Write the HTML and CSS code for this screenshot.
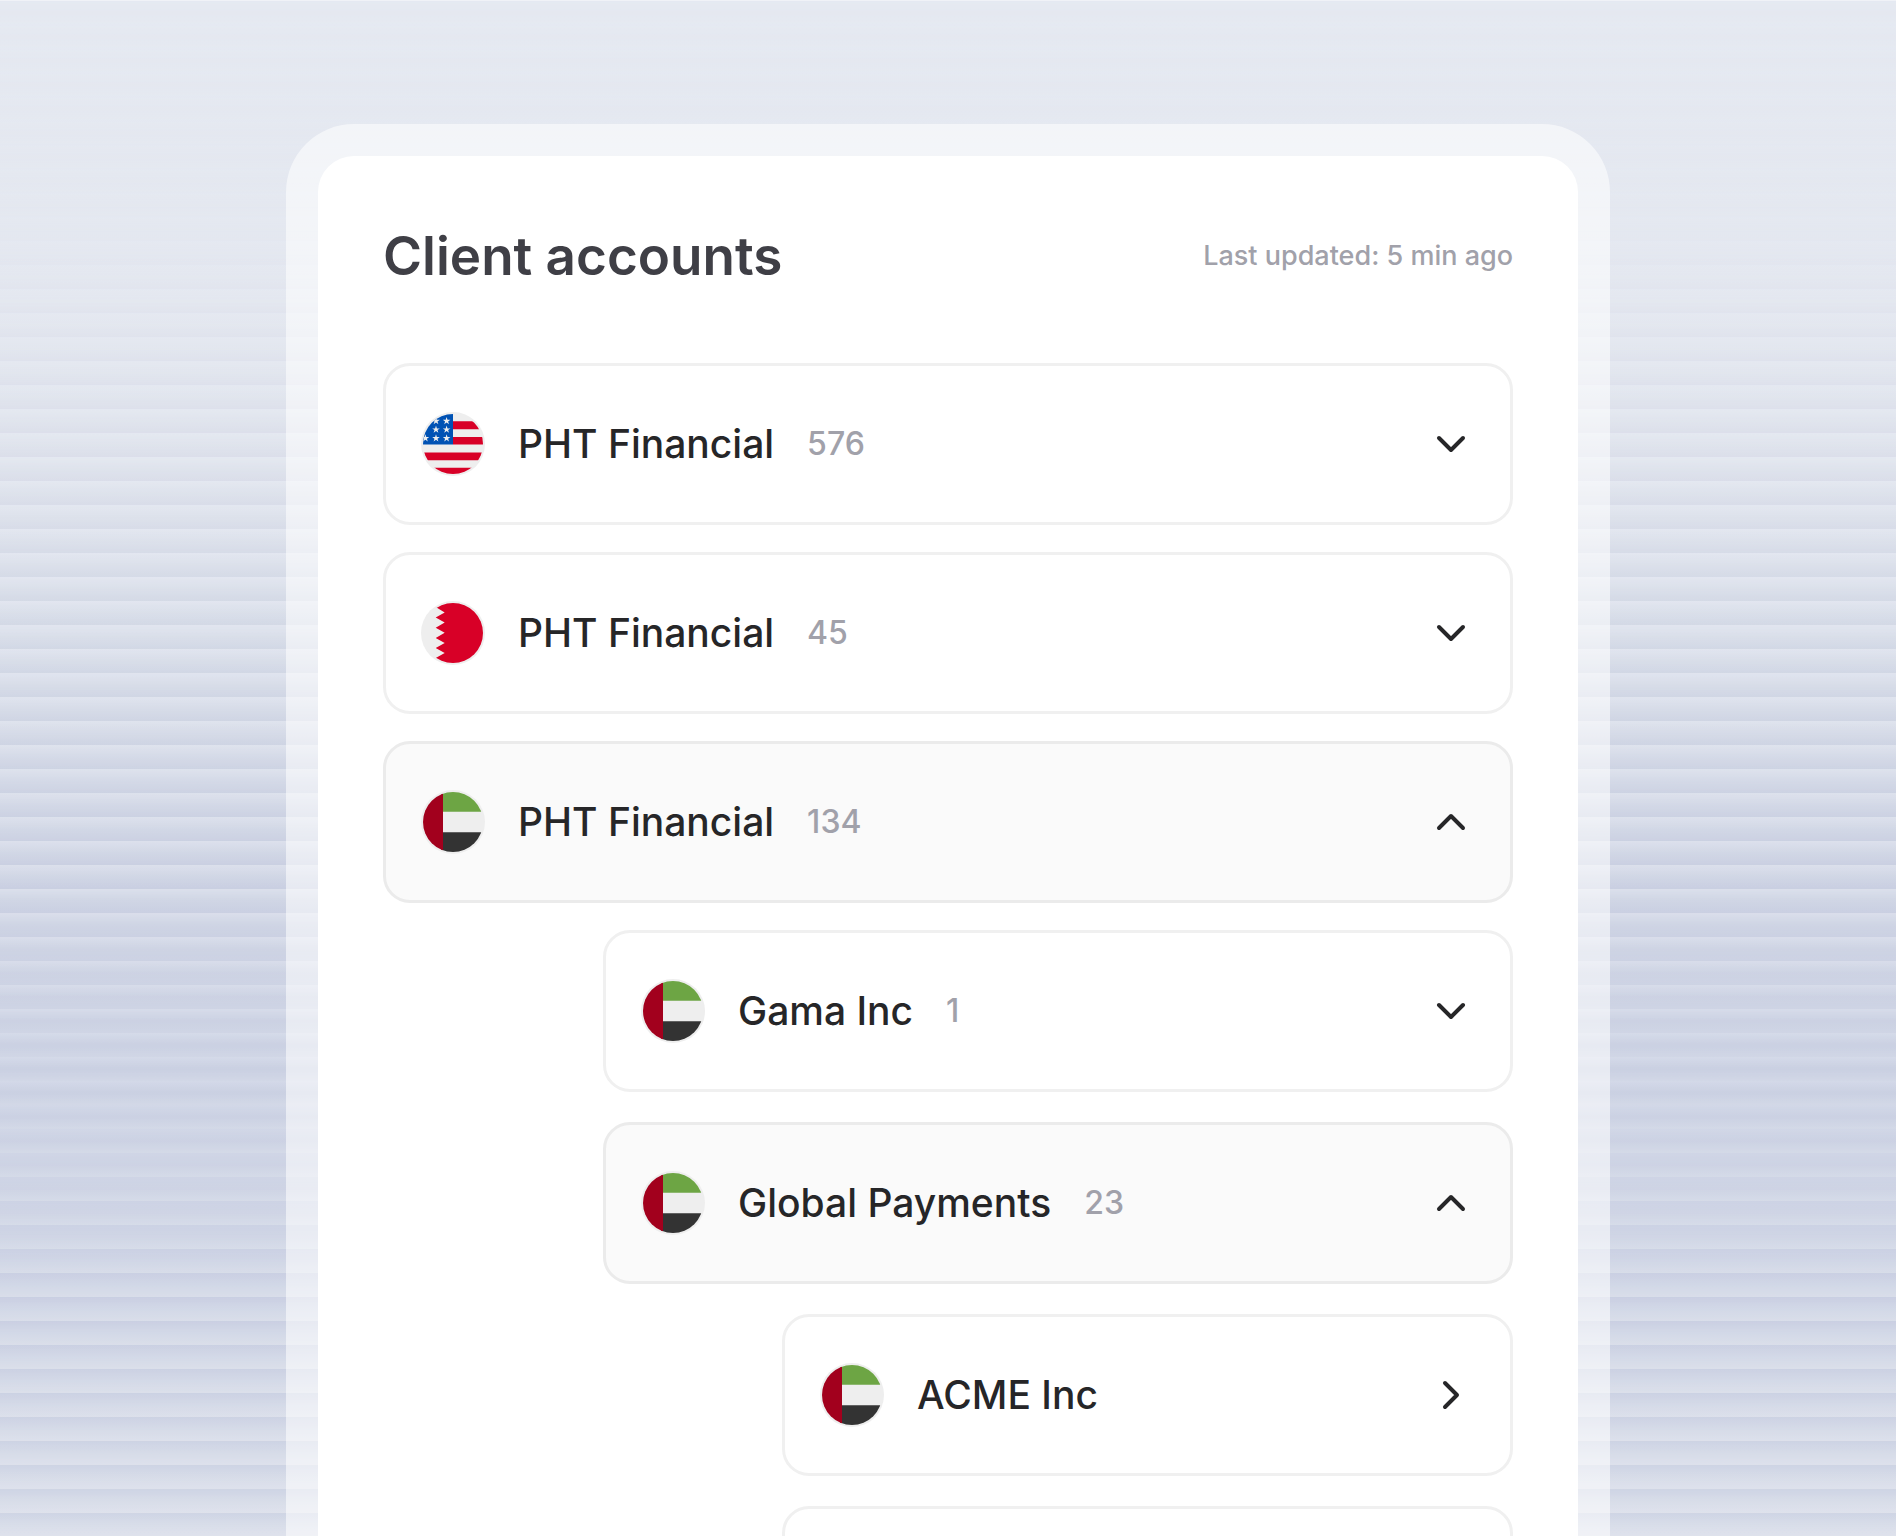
FILE: index.html
```html
<!DOCTYPE html>
<html lang="en">
<head>
    <meta charset="UTF-8">
    <meta name="viewport" content="width=device-width, initial-scale=1.0">
    <title>Client accounts</title>
    <link rel="stylesheet" href="styles.css">
</head>
<body>
    <!-- Shared icons -->
    <svg class="sprite" aria-hidden="true">
        <symbol id="chevron-down" viewBox="0 0 24 24"><path d="M6 9l6 6 6-6"/></symbol>
        <symbol id="chevron-up" viewBox="0 0 24 24"><path d="M6 15l6-6 6 6"/></symbol>
        <symbol id="chevron-right" viewBox="0 0 24 24"><path d="M9 6l6 6-6 6"/></symbol>
        <clipPath id="round"><circle cx="32" cy="32" r="30"/></clipPath>
        <path id="star" d="M0-4L.9-1.2H3.8L1.5.5 2.4 3.2 0 1.5-2.4 3.2-1.5.5-3.8-1.2H-.9Z" fill="#eee"/>
        <symbol id="flag-us" viewBox="0 0 64 64">
            <circle cx="32" cy="32" r="32" fill="#eee"/>
            <g clip-path="url(#round)">
                <path d="M32 9.3h32v8H32zM32 25h32v7.6H32zM0 40.6h64v7.7H0zM0 55.8h64V64H0z" fill="#d80027"/>
                <path d="M0 0h32v32.5H0z" fill="#0052b4"/>
                <use href="#star" x="15" y="9"/>
                <use href="#star" x="25.6" y="9"/>
                <use href="#star" x="4.4" y="26.2"/>
                <use href="#star" x="15" y="17.6"/>
                <use href="#star" x="25.6" y="17.6"/>
                <use href="#star" x="15" y="26.2"/>
                <use href="#star" x="25.6" y="26.2"/>
            </g>
        </symbol>
        <symbol id="flag-bh" viewBox="0 0 64 64">
            <circle cx="32" cy="32" r="32" fill="#eee"/>
            <path clip-path="url(#round)" d="M64 0H14.7V6l9 5.5-9 5 9 5-9 5.2 9 5.1-9 5.1 9 5-9 5 9 5-9 5V64H64z" fill="#d80027"/>
        </symbol>
        <symbol id="flag-ae" viewBox="0 0 64 64">
            <circle cx="32" cy="32" r="32" fill="#eee"/>
            <g clip-path="url(#round)">
                <path d="M20 0h44v21.7H20z" fill="#6da544"/>
                <path d="M20 42.3h44V64H20z" fill="#333"/>
                <path d="M0 0h22v64H0z" fill="#a2001d"/>
            </g>
        </symbol>
    </svg>

    <div class="stage">
        <main class="frame">
            <section class="panel">
                <header class="panel-header">
                    <h1>Client accounts</h1>
                    <p class="updated">Last updated: 5 min ago</p>
                </header>

                <ul class="accounts">
                    <li>
                        <button class="account" type="button" aria-expanded="false">
                            <svg class="flag" aria-hidden="true"><use href="#flag-us"/></svg>
                            <span class="name">PHT Financial</span>
                            <span class="count">576</span>
                            <svg class="chevron" aria-hidden="true"><use href="#chevron-down"/></svg>
                        </button>
                    </li>
                    <li>
                        <button class="account" type="button" aria-expanded="false">
                            <svg class="flag" aria-hidden="true"><use href="#flag-bh"/></svg>
                            <span class="name">PHT Financial</span>
                            <span class="count">45</span>
                            <svg class="chevron" aria-hidden="true"><use href="#chevron-down"/></svg>
                        </button>
                    </li>
                    <li>
                        <button class="account open" type="button" aria-expanded="true">
                            <svg class="flag" aria-hidden="true"><use href="#flag-ae"/></svg>
                            <span class="name">PHT Financial</span>
                            <span class="count">134</span>
                            <svg class="chevron" aria-hidden="true"><use href="#chevron-up"/></svg>
                        </button>
                        <ul class="accounts level-2">
                            <li>
                                <button class="account" type="button" aria-expanded="false">
                                    <svg class="flag" aria-hidden="true"><use href="#flag-ae"/></svg>
                                    <span class="name">Gama Inc</span>
                                    <span class="count">1</span>
                                    <svg class="chevron" aria-hidden="true"><use href="#chevron-down"/></svg>
                                </button>
                            </li>
                            <li>
                                <button class="account open" type="button" aria-expanded="true">
                                    <svg class="flag" aria-hidden="true"><use href="#flag-ae"/></svg>
                                    <span class="name">Global Payments</span>
                                    <span class="count">23</span>
                                    <svg class="chevron" aria-hidden="true"><use href="#chevron-up"/></svg>
                                </button>
                                <ul class="accounts level-3">
                                    <li>
                                        <a class="account" href="#">
                                            <svg class="flag" aria-hidden="true"><use href="#flag-ae"/></svg>
                                            <span class="name">ACME Inc</span>
                                            <svg class="chevron" aria-hidden="true"><use href="#chevron-right"/></svg>
                                        </a>
                                    </li>
                                    <li>
                                        <div class="account"></div>
                                    </li>
                                </ul>
                            </li>
                        </ul>
                    </li>
                </ul>
            </section>
        </main>
    </div>
</body>
</html>
```

FILE: styles.css
```css
* {
    box-sizing: border-box;
}
body {
    margin: 0;
    font-family: Inter, "Liberation Sans", sans-serif;
    font-weight: 500;
    color: #262628;
}
.sprite {
    position: absolute;
    width: 0;
    height: 0;
}

/* Ribbed background: each 24px rib blends from the ::before
   colours (top edge) through the base to the ::after colours */
.stage {
    position: relative;
    height: 100vh;
    overflow: hidden;
    padding: 123px 40px 0;
    border-top: 1px solid #f0f2f7;
    background: linear-gradient(180deg, #e5e9f1 0%, #e4e8f0 20%, #dadfea 41%, #d0d6e5 58%, #cad0e2 70%, #d2d8e7 84%, #d9deea 100%);
}
.stage::before,
.stage::after {
    content: '';
    position: absolute;
    inset: 0;
}
.stage::before {
    background: linear-gradient(180deg, #e5e9f1 0%, #e4e8f0 30%, #e1e5ef 41%, #dbdfeb 58%, #d3d9e8 70%, #c9cee2 84%, #cfd5e4 100%);
    -webkit-mask-image: repeating-linear-gradient(180deg, #000 0, transparent 12px, transparent 24px);
    mask-image: repeating-linear-gradient(180deg, #000 0, transparent 12px, transparent 24px);
}
.stage::after {
    background: linear-gradient(180deg, #e5e9f1 0%, #e4e8f0 14%, #dcdfea 28%, #d2d8e5 41%, #c9cee1 58%, #d1d7e6 70%, #d8dde9 84%, #dfe2ec 100%);
    -webkit-mask-image: repeating-linear-gradient(180deg, transparent 0, transparent 12px, #000 24px);
    mask-image: repeating-linear-gradient(180deg, transparent 0, transparent 12px, #000 24px);
}

.frame {
    position: relative;
    z-index: 1;
    max-width: 1324px;
    margin: 0 auto;
    padding: 32px;
    border-radius: 68px;
    background-color: rgba(255, 255, 255, 0.55);
}
.panel {
    padding: 67px 65px;
    border-radius: 36px;
    background-color: #fff;
}
.panel-header {
    display: flex;
    align-items: center;
    justify-content: space-between;
    margin-bottom: 74px;
}
h1 {
    margin: 0;
    font-size: 53px;
    font-weight: 600;
    line-height: 66px;
    color: #3f3f46;
}
.updated {
    margin: 0;
    font-size: 27px;
    line-height: 32px;
    color: #a1a1aa;
}

.accounts {
    display: flex;
    flex-direction: column;
    gap: 27px;
    margin: 0;
    padding: 0;
    list-style: none;
}
.level-2 {
    gap: 30px;
    margin-top: 27px;
    margin-left: 220px;
}
.level-3 {
    gap: 30px;
    margin-top: 30px;
    margin-left: 179px;
}
.account {
    display: flex;
    align-items: center;
    width: 100%;
    height: 162px;
    padding: 0 35px;
    border: 3px solid #f0f0f0;
    border-radius: 27px;
    background-color: #fff;
    font-family: inherit;
    font-weight: inherit;
    color: inherit;
    text-align: left;
    text-decoration: none;
    cursor: pointer;
}
.account.open {
    border-color: #ebebeb;
    background-color: #fafafa;
}
.flag {
    flex: none;
    width: 64px;
    height: 64px;
    margin-right: 33px;
}
.name {
    font-size: 39px;
    line-height: 48px;
}
.count {
    margin-left: 33px;
    font-size: 32px;
    line-height: 40px;
    color: #a1a1aa;
}
.chevron {
    flex: none;
    width: 48px;
    height: 48px;
    margin-left: auto;
    fill: none;
    stroke: #262628;
    stroke-width: 2;
    stroke-linecap: round;
    stroke-linejoin: round;
}
```
